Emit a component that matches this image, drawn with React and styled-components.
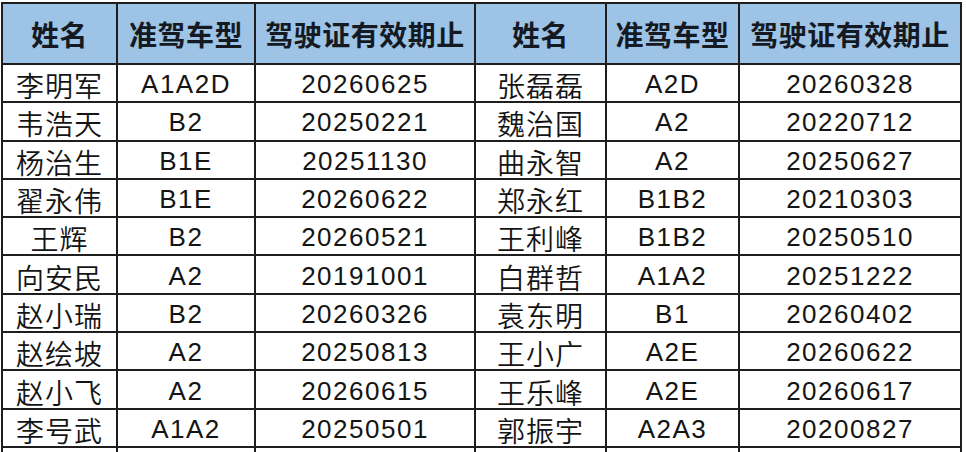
import React from 'react';
import styled, { createGlobalStyle } from 'styled-components';

const GlobalStyle = createGlobalStyle`
  html, body {
    margin: 0;
    padding: 0;
    background: #ffffff;
  }
  body {
    font-family: "Liberation Sans", "Noto Sans CJK SC", sans-serif;
    overflow: hidden;
  }
`;

const Page = styled.div`
  width: 966px;
  height: 452px;
  padding: 2px 0 0 1px;
  box-sizing: border-box;
  overflow: hidden;
`;

const Table = styled.table`
  border-collapse: collapse;
  table-layout: fixed;
  width: 961px;
`;

const Row = styled.tr`
  height: ${(p) => (p.$head ? '61px' : '38.3px')};
`;

const HeadCell = styled.th`
  padding: 0;
  background: #9dc3e6;
  border: 2px solid #1e1e1e;
  color: #151a22;
  font-family: "Noto Sans CJK SC", sans-serif;
  font-weight: 700;
  font-size: 28px;
  line-height: 1;
  letter-spacing: 0.5px;
  white-space: nowrap;
  text-align: center;
  vertical-align: middle;
`;

const Cell = styled.td`
  padding: ${(p) => (p.$latin ? '2px 0 0' : '4px 0 0')};
  border: 2px solid #1e1e1e;
  color: #141414;
  text-align: center;
  vertical-align: middle;
  white-space: nowrap;
  line-height: 1;
  font-family: ${(p) =>
    p.$latin
      ? '"Liberation Sans", sans-serif'
      : '"Noto Sans CJK SC", sans-serif'};
  font-size: ${(p) => (p.$latin ? '26px' : '28px')};
  font-weight: ${(p) => (p.$latin ? 400 : 350)};
  letter-spacing: ${(p) => (p.$latin ? '1.5px' : '1px')};
`;

const widths = [115, 138, 220, 131, 133, 222];
const headers = ['姓名', '准驾车型', '驾驶证有效期止', '姓名', '准驾车型', '驾驶证有效期止'];

const rows = [
  ['李明军', 'A1A2D', '20260625', '张磊磊', 'A2D', '20260328'],
  ['韦浩天', 'B2', '20250221', '魏治国', 'A2', '20220712'],
  ['杨治生', 'B1E', '20251130', '曲永智', 'A2', '20250627'],
  ['翟永伟', 'B1E', '20260622', '郑永红', 'B1B2', '20210303'],
  ['王辉', 'B2', '20260521', '王利峰', 'B1B2', '20250510'],
  ['向安民', 'A2', '20191001', '白群哲', 'A1A2', '20251222'],
  ['赵小瑞', 'B2', '20260326', '袁东明', 'B1', '20260402'],
  ['赵绘坡', 'A2', '20250813', '王小广', 'A2E', '20260622'],
  ['赵小飞', 'A2', '20260615', '王乐峰', 'A2E', '20260617'],
  ['李号武', 'A1A2', '20250501', '郭振宇', 'A2A3', '20200827'],
  ['', '', '', '', '', ''],
];

export default function App() {
  return (
    <Page>
      <GlobalStyle />
      <Table>
        <colgroup>
          {widths.map((w, i) => (
            <col key={i} style={{ width: w }} />
          ))}
        </colgroup>
        <thead>
          <Row $head>
            {headers.map((h, i) => (
              <HeadCell key={i}>{h}</HeadCell>
            ))}
          </Row>
        </thead>
        <tbody>
          {rows.map((r, ri) => (
            <Row key={ri}>
              {r.map((v, ci) => (
                <Cell key={ci} $latin={ci % 3 !== 0}>
                  {v}
                </Cell>
              ))}
            </Row>
          ))}
        </tbody>
      </Table>
    </Page>
  );
}
